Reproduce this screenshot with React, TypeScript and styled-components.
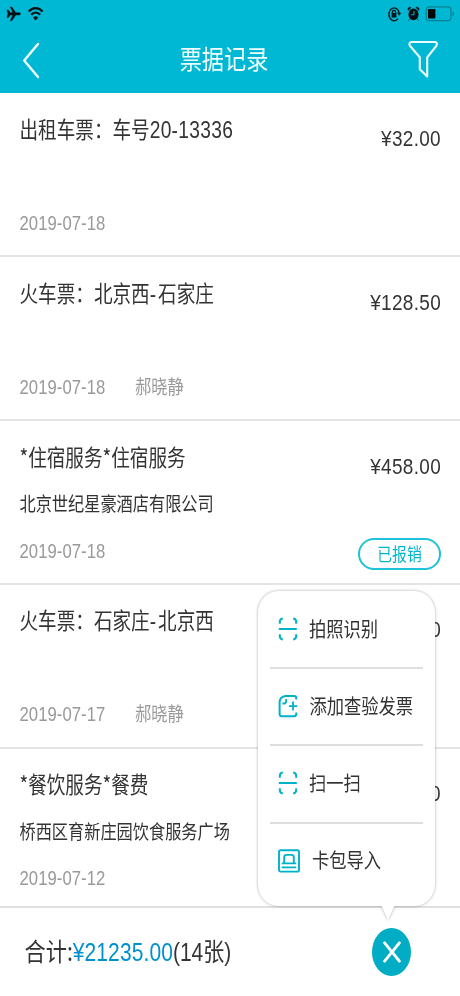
import React from "react";
import styled, { createGlobalStyle } from "styled-components";

const GlobalStyle = createGlobalStyle`
  * { box-sizing: border-box; }
  html, body { margin: 0; padding: 0; background: #fff; }
  body { font-family: "Noto Sans CJK SC", sans-serif; font-weight: 400; }
  svg { display: block; flex: none; }
`;

const Screen = styled.div`
  position: relative;
  width: 460px;
  height: 996px;
  display: flex;
  flex-direction: column;
  overflow: hidden;
  background: #fff;
`;

const Header = styled.header`
  height: 93.4px;
  flex: none;
  display: flex;
  flex-direction: column;
  background: #00b8d4;
`;

const StatusBar = styled.div`
  height: 28px;
  padding: 0 5px 0 6px;
  display: flex;
  justify-content: space-between;
`;

const NavBar = styled.div`
  height: 65px;
  padding: 0 21px 0 22px;
  display: grid;
  grid-template-columns: 60px 1fr 60px;
  align-items: center;
`;

const FilterButton = styled.div`
  justify-self: end;
  padding-bottom: 1px;
`;

/* Tall, condensed lettering used through the whole screen */
const Label = styled.span<{ $size: number; $color?: string }>`
  display: block;
  height: 28px;
  line-height: 28px;
  white-space: pre;
  font-size: ${(p) => p.$size}px;
  color: ${(p) => p.$color ?? "#333"};
  transform: scaleY(1.2);
  transform-origin: left center;
`;

const Num = styled.span<{ $size: number; $gap?: number }>`
  font-family: "Liberation Sans", sans-serif;
  font-size: ${(p) => p.$size}px;
  line-height: 1;
  letter-spacing: ${(p) => p.$gap ?? 0}px;
`;

const NavTitle = styled(Label)`
  justify-self: center;
  margin: 0 13px 7px 0;
`;

const List = styled.main`
  height: 812.6px;
  flex: none;
  overflow: hidden;
`;

const Row = styled.article`
  height: 163.8px;
  padding: 20.6px 19px 0 19.5px;
  display: flex;
  justify-content: space-between;
  border-bottom: 2px solid #e4e4e4;
`;

const Details = styled.div`
  display: flex;
  flex-direction: column;
  align-items: flex-start;
`;

const Subtitle = styled.div`
  height: 28px;
  margin: 19.4px 0 18.6px;
`;

const Meta = styled.div`
  display: flex;
  gap: 29.5px;
`;

const Side = styled.div`
  padding-top: 10px;
  display: flex;
  flex-direction: column;
  align-items: flex-end;
`;

const Badge = styled.div`
  width: 83px;
  height: 32px;
  margin-top: 58.6px;
  padding-bottom: 1px;
  display: flex;
  align-items: center;
  justify-content: center;
  border: 2px solid #1fc2d8;
  border-radius: 17px;
`;

const Footer = styled.footer`
  flex: 1;
  padding: 0 49px 0 24.5px;
  display: flex;
  align-items: center;
  justify-content: space-between;
  border-top: 2px solid #e0e0e0;
`;

const Total = styled.div`
  display: flex;
  padding-bottom: 3.5px;
`;

const CloseButton = styled.div`
  width: 39px;
  height: 48px;
  display: flex;
  align-items: center;
  justify-content: center;
  border-radius: 50%;
  background: #00adc4;
`;

const Popover = styled.div`
  position: absolute;
  left: 258.4px;
  top: 591px;
  width: 176.6px;
  height: 314.5px;
  padding: 0 12px 0 11.6px;
  border-radius: 20px / 22px;
  background: #fff;
  filter: drop-shadow(0 0 1.8px rgba(0, 0, 0, 0.33));
`;

const Tail = styled.svg`
  position: absolute;
  left: 122px;
  top: 313.5px;
`;

const MenuItem = styled.div<{ $gap: number }>`
  height: 77.3px;
  padding: 0 0 1px 7.9px;
  display: flex;
  align-items: center;
  gap: ${(p) => p.$gap}px;
  &:first-child { height: 76px; padding-bottom: 0; }
  & + & {
    border-top: 2px solid #dedede;
    padding-bottom: 1px;
  }
`;

const MenuText = styled(Label)`
  margin-bottom: 1px;
`;

const StatusGroup = styled.div`
  display: flex;
`;

const StatusLeft = () => (
  <svg width="40" height="28" viewBox="6 0 40 28">
    <path d="M7 10h1.3l2 2.7h2.6L10.3 7h1.5l4 5.7h3.4c1.7 0 1.7 2.2 0 2.2h-3.4l-4 5.8h-1.5l2.6-5.8h-2.6l-2 2.6H7l1-3.7z" fill="#061114" stroke="#061114" strokeWidth="0.5" />
    <g fill="none" stroke="#061114" strokeWidth="2.2">
      <path d="M28.7 11.6c4-4.7 9.9-4.7 13.9 0" />
      <path d="M31.2 14.8c2.6-3.1 6.3-3.1 8.9 0" />
    </g>
    <path d="M33 17.6c1.6-1.8 3.7-1.8 5.3 0L35.7 20.6z" fill="#061114" />
  </svg>
);

const StatusRight = () => (
  <svg width="70" height="28" viewBox="385 0 70 28">
    <g fill="none" stroke="#06181c" strokeWidth="1.4">
      <path d="M398 18.6a5.2 6.4 0 1 1 1.2-5.6" />
      <path d="M392.4 13.3v-1.2c0-2.3 3.2-2.3 3.2 0v1.2" />
    </g>
    <path d="M391.6 13h4.8v4.5h-4.8zM397 12.7h4.2l-2.1 3z" fill="#06181c" />
    <ellipse cx="413.5" cy="14.4" rx="5" ry="5.9" fill="#030c0e" />
    <path d="M408.2 10.3c-.7-2.3 1-3.7 2.9-2.8zM418.8 10.3c.7-2.3-1-3.7-2.9-2.8zM409.6 19l-1 1.6M417.4 19l1 1.6" fill="#030c0e" stroke="#030c0e" strokeWidth="0.7" />
    <path d="M413.9 10.8v3.9h-3" fill="none" stroke="#08a3bb" strokeWidth="1.1" />
    <rect x="426.2" y="6.8" width="24.8" height="13.8" rx="3.2" fill="none" stroke="#057f91" strokeWidth="1.2" />
    <rect x="428" y="9" width="7.4" height="9.6" rx="0.8" fill="#020808" />
    <path d="M452.6 11.3c1.7.8 1.7 4.1 0 4.9z" fill="#087284" />
  </svg>
);

const BackIcon = () => (
  <svg width="20" height="38" viewBox="0 0.8 20 38" fill="none" stroke="#f2feff" strokeWidth="2.4" strokeLinecap="round" strokeLinejoin="round">
    <path d="M16 2.8L2.2 19.3 16 35.8" />
  </svg>
);

const FilterIcon = () => (
  <svg width="32" height="40" viewBox="407 40 32 40" fill="none" stroke="#e9fdff" strokeWidth="2.1" strokeLinejoin="round">
    <path d="M411.5 42H435C437.2 42 437.5 44.6 436.2 46L427.2 57.3V76.5L419.8 69.2V57.3L410.1 46C408.8 44.4 409.3 42 411.5 42Z" />
  </svg>
);

const ScanIcon = () => (
  <svg width="20" height="24" viewBox="0 0 20 24" fill="none" stroke="#00b2c8" strokeWidth="2">
    <path d="M1.8 6.8V5q0-3 3-3.4M15.2 1.6q3 .4 3 3.4v1.8M18.2 17.2V19q0 3-3 3.4M4.8 22.4q-3-.4-3-3.4v-1.8M.8 12h18" />
  </svg>
);

const InvoiceIcon = () => (
  <svg width="20" height="24" viewBox="0 0 20 24" fill="none" stroke="#00b2c8" strokeWidth="2">
    <path d="M18.3 5.4V4.4q0-2.4-2.3-2.4H7.2Q1.6 3.2 1.6 8.4V19.7q0 2.5 2.3 2.5h12.2q2.2 0 2.2-2.4v-1.2" />
    <path d="M8.1 5v2.6q0 1.9-1.8 1.9H4.4M15 7.6v9M10.9 12.1h8.4" strokeWidth="1.8" />
  </svg>
);

const WalletIcon = () => (
  <svg width="22" height="24" viewBox="0 0 22 24" fill="none" stroke="#00b2c8" strokeWidth="1.9">
    <rect x="1" y="1.2" width="20" height="21.4" rx="1.6" />
    <path d="M6.2 13.8V8.2q0-2.3 2.2-2.3h5.2q2.2 0 2.2 2.3v5.6M3.8 14.4h14.4M3.8 18.4h14.4" />
  </svg>
);

const CloseIcon = () => (
  <svg width="20" height="24" viewBox="0 0 20 24" stroke="#fff" strokeWidth="2.9" strokeLinecap="round">
    <path d="M2.6 2.8l14.8 18.4M17.4 2.8L2.6 21.2" />
  </svg>
);

type Ticket = {
  title: string;
  subtitle?: string;
  date: string;
  person?: string;
  amount: string;
  claimed?: boolean;
};

const tickets: Ticket[] = [
  { title: "出租车票：车号20-13336", date: "2019-07-18", amount: "¥32.00" },
  { title: "火车票：北京西-石家庄", date: "2019-07-18", person: "郝晓静", amount: "¥128.50" },
  { title: "*住宿服务*住宿服务", subtitle: "北京世纪星豪酒店有限公司", date: "2019-07-18", amount: "¥458.00", claimed: true },
  { title: "火车票：石家庄-北京西", date: "2019-07-17", person: "郝晓静", amount: "¥128.50" },
  { title: "*餐饮服务*餐费", subtitle: "桥西区育新庄园饮食服务广场", date: "2019-07-12", amount: "¥60.00" },
];

const menu = [
  { label: "拍照识别", icon: <ScanIcon />, gap: 11 },
  { label: "添加查验发票", icon: <InvoiceIcon />, gap: 11.5 },
  { label: "扫一扫", icon: <ScanIcon />, gap: 11 },
  { label: "卡包导入", icon: <WalletIcon />, gap: 12 },
];

/* Latin digits and dashes inside a title are set in the numeric face */
const TitleText = ({ text }: { text: string }) => (
  <Label $size={18.6}>
    {text.split(/([\d-]+)/).map((part, i) =>
      i % 2 ? <Num key={i} $size={19.2} $gap={part === "-" ? 2 : 0.3}>{part}</Num> : part
    )}
  </Label>
);

const TicketRow = ({ ticket }: { ticket: Ticket }) => (
  <Row>
    <Details>
      <TitleText text={ticket.title} />
      <Subtitle>{ticket.subtitle && <Label $size={16.2}>{ticket.subtitle}</Label>}</Subtitle>
      <Meta>
        <Label $size={16.3} $color="#999"><Num $size={16.7} $gap={0.05}>{ticket.date}</Num></Label>
        {ticket.person && <Label $size={16.3} $color="#999">{ticket.person}</Label>}
      </Meta>
    </Details>
    <Side>
      <Label $size={17.6}><Num $size={19} $gap={0.3}>{ticket.amount}</Num></Label>
      {ticket.claimed && <Badge><Label $size={14.8} $color="#00b5cd">已报销</Label></Badge>}
    </Side>
  </Row>
);

export default function App() {
  return (
    <>
      <GlobalStyle />
      <Screen lang="zh-CN">
        <Header>
          <StatusBar>
            <StatusGroup><StatusLeft /></StatusGroup>
            <StatusGroup><StatusRight /></StatusGroup>
          </StatusBar>
          <NavBar>
            <BackIcon />
            <NavTitle $size={22.2} $color="#effdff">票据记录</NavTitle>
            <FilterButton><FilterIcon /></FilterButton>
          </NavBar>
        </Header>
        <List>
          {tickets.map((t, i) => <TicketRow key={i} ticket={t} />)}
        </List>
        <Footer>
          <Total>
            <Label $size={21.2}>合计:</Label>
            <Label $size={21} $color="#0090d0"><Num $size={21} $gap={0.1}>¥21235.00</Num></Label>
            <Label $size={21}><Num $size={21}>(14</Num>张<Num $size={21}>)</Num></Label>
          </Total>
          <CloseButton><CloseIcon /></CloseButton>
        </Footer>
        <Popover>
          {menu.map((m) => (
            <MenuItem key={m.label} $gap={m.gap}>
              {m.icon}
              <MenuText $size={17.3}>{m.label}</MenuText>
            </MenuItem>
          ))}
          <Tail width="16" height="16" viewBox="0 0 16 16"><path d="M1 0h14L8 15z" fill="#fff" /></Tail>
        </Popover>
      </Screen>
    </>
  );
}
